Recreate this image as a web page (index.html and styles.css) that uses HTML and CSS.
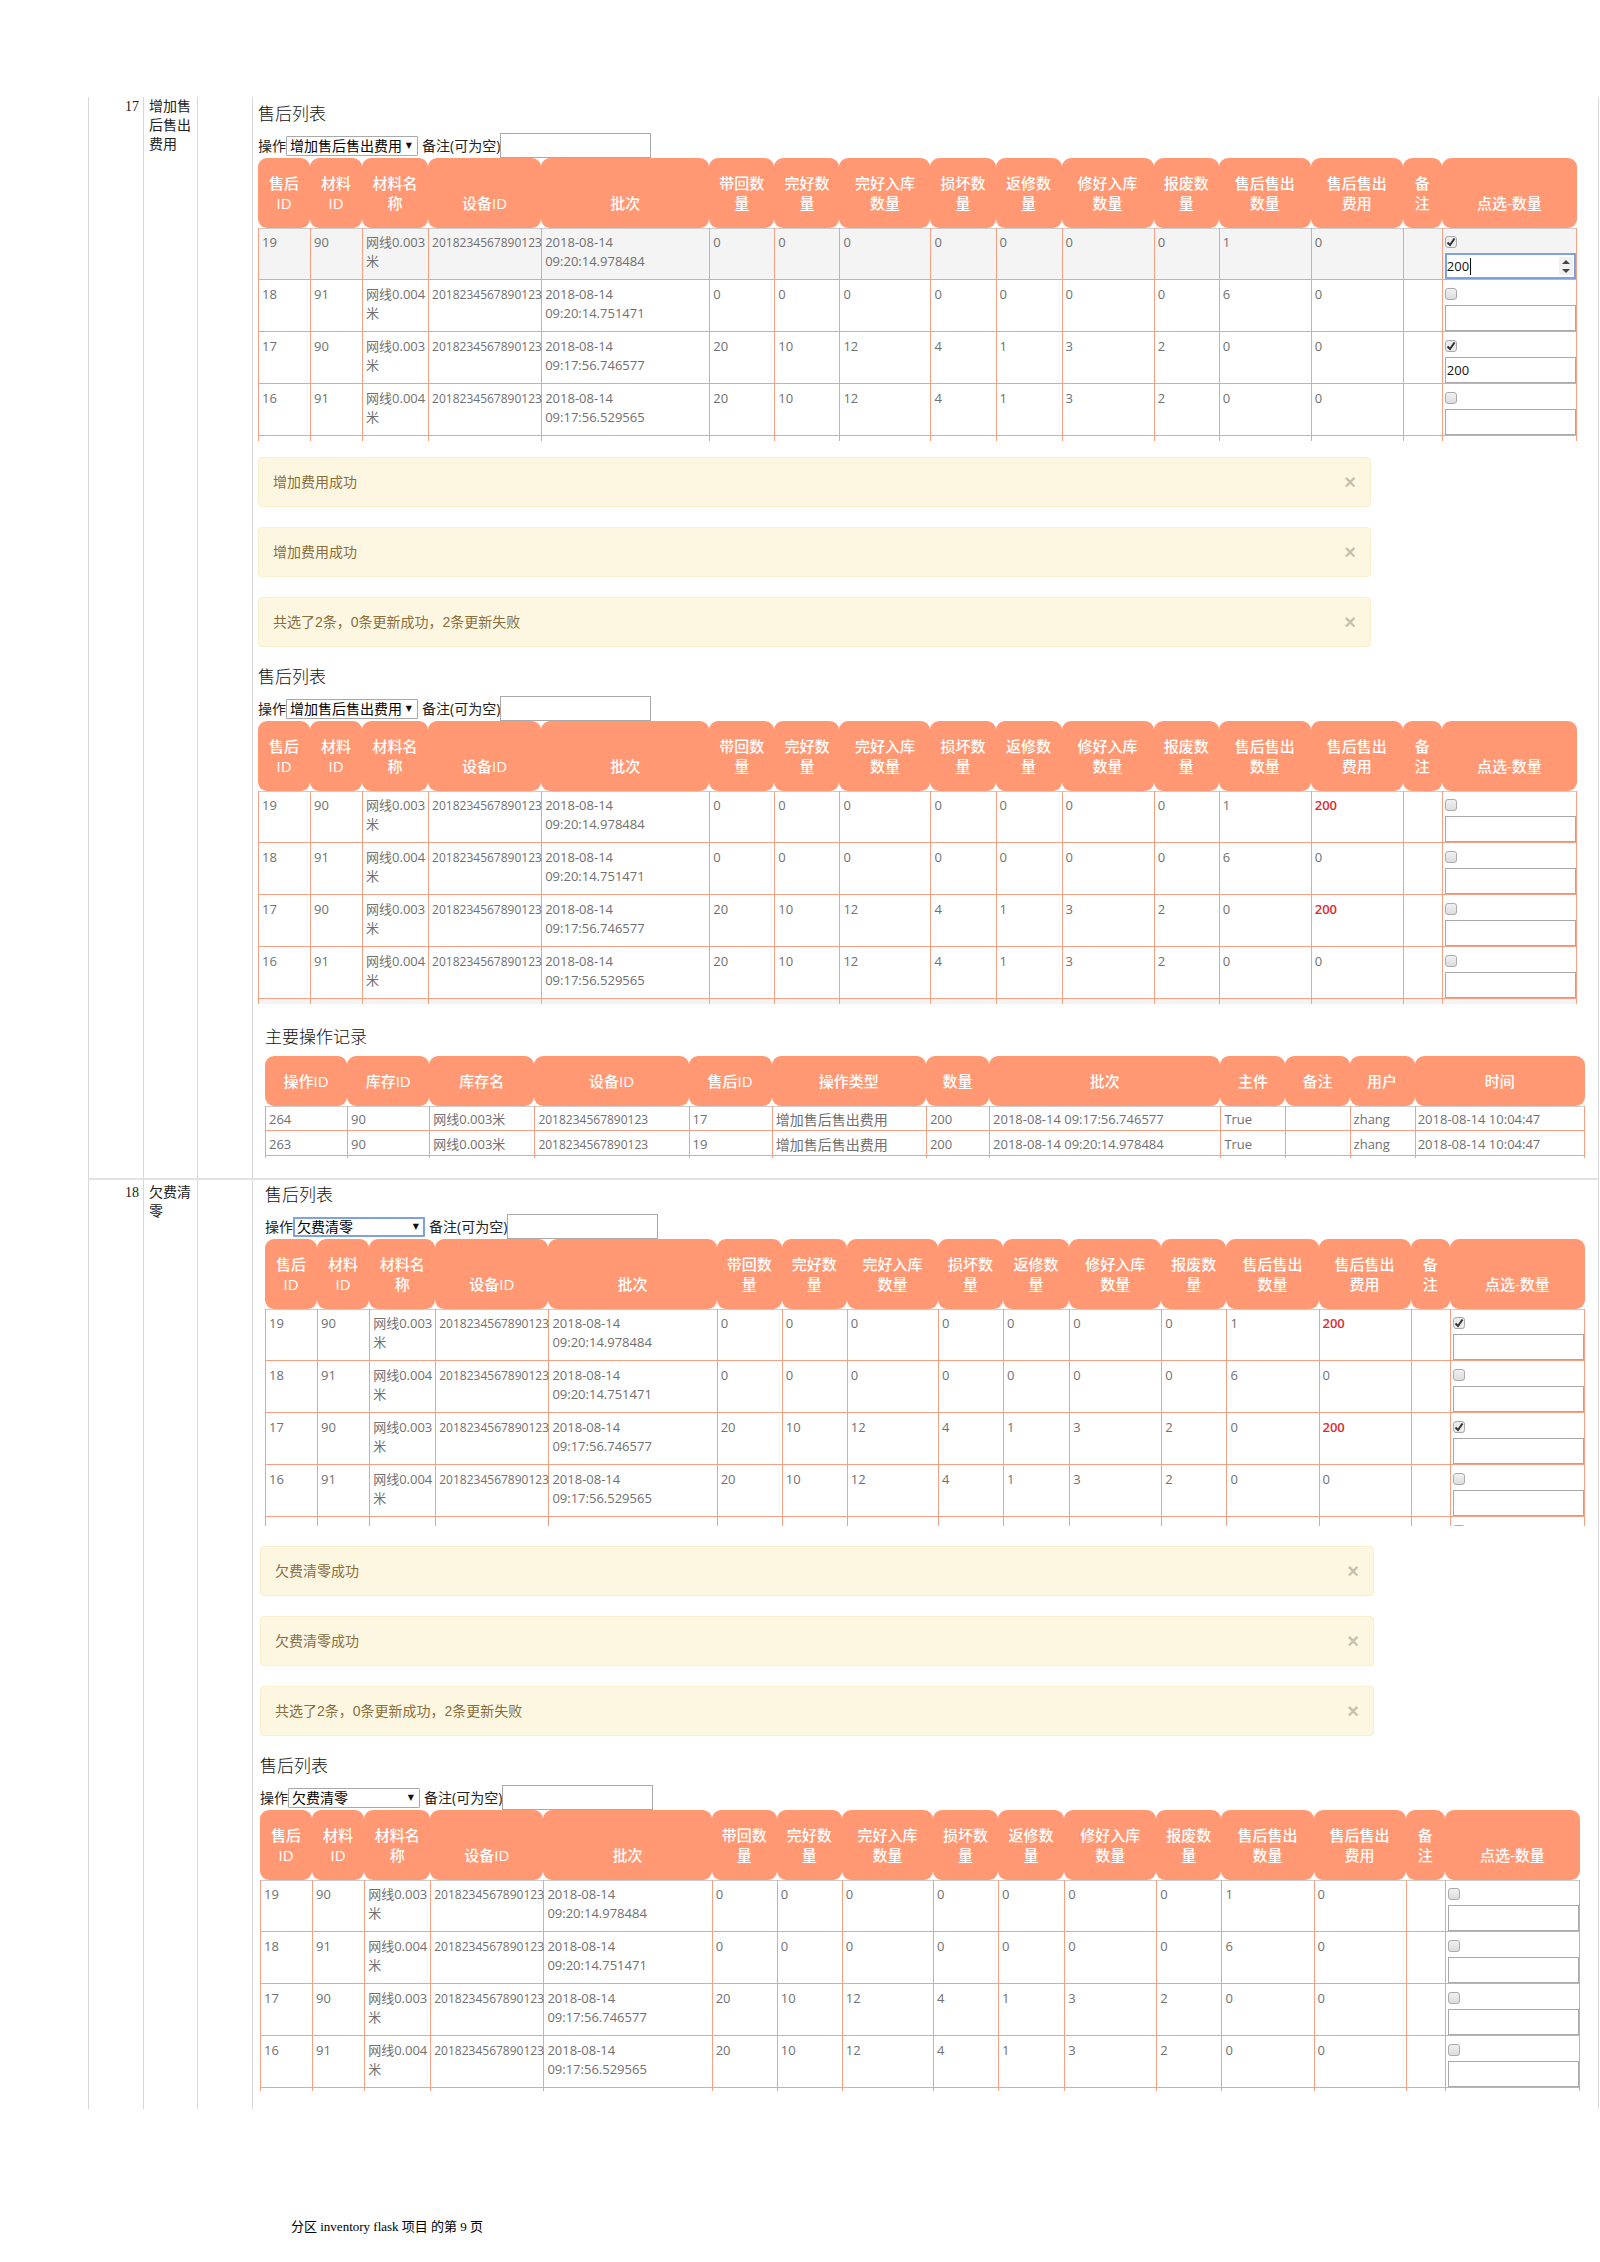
FILE: index.html
```html
<!DOCTYPE html>
<html lang="zh-CN">
<head>
<meta charset="utf-8">
<title>inventory flask 项目</title>
<link rel="stylesheet" href="styles.css">
</head>
<body>
<main class="doc">
<section class="entry">
<div class="no">17</div>
<div class="name">增加售后售出费用</div>
<div class="blank"></div>
<div class="body">

<div class="shot first">
<h2>售后列表</h2>
<form class="controls">
<label for="op1">操作</label><span class="pick"><select id="op1"><option>增加售后售出费用</option><option>欠费清零</option></select></span>
<label for="memo1" class="memo">备注(可为空)</label><input id="memo1" type="text">
</form>
<table class="grid">
<colgroup><col class="w52"><col class="w52"><col class="w66"><col class="w113"><col class="w168"><col class="w65"><col class="w65"><col class="w91"><col class="w65"><col class="w66"><col class="w92"><col class="w65"><col class="w92"><col class="w92"><col class="w39"><col class="w135"></colgroup>
<thead><tr><th>售后<br>ID</th><th>材料<br>ID</th><th>材料名<br>称</th><th>设备ID</th><th>批次</th><th>带回数<br>量</th><th>完好数<br>量</th><th>完好入库<br>数量</th><th>损坏数<br>量</th><th>返修数<br>量</th><th>修好入库<br>数量</th><th>报废数<br>量</th><th>售后售出<br>数量</th><th>售后售出<br>费用</th><th>备<br>注</th><th>点选-数量</th></tr></thead>
<tbody>
<tr class="hover"><td>19</td><td>90</td><td>网线0.003<br>米</td><td class="dev">2018234567890123</td><td>2018-08-14<br>09:20:14.978484</td><td>0</td><td>0</td><td>0</td><td>0</td><td>0</td><td>0</td><td>0</td><td>1</td><td>0</td><td></td><td><input type="checkbox" aria-label="点选" checked><div class="spin"><input class="active" type="number" aria-label="数量" value="200"><span class="caret"></span><svg viewBox="0 0 14 18" aria-hidden="true"><rect width="14" height="18" fill="#f0f0f0"/><path d="M3 7 7 3l4 4zM3 12l4 4 4-4z" fill="#444"/></svg></div></td></tr>
<tr><td>18</td><td>91</td><td>网线0.004<br>米</td><td class="dev">2018234567890123</td><td>2018-08-14<br>09:20:14.751471</td><td>0</td><td>0</td><td>0</td><td>0</td><td>0</td><td>0</td><td>0</td><td>6</td><td>0</td><td></td><td><input type="checkbox" aria-label="点选"><input type="number" aria-label="数量"></td></tr>
<tr><td>17</td><td>90</td><td>网线0.003<br>米</td><td class="dev">2018234567890123</td><td>2018-08-14<br>09:17:56.746577</td><td>20</td><td>10</td><td>12</td><td>4</td><td>1</td><td>3</td><td>2</td><td>0</td><td>0</td><td></td><td><input type="checkbox" aria-label="点选" checked><input type="number" aria-label="数量" value="200"></td></tr>
<tr><td>16</td><td>91</td><td>网线0.004<br>米</td><td class="dev">2018234567890123</td><td>2018-08-14<br>09:17:56.529565</td><td>20</td><td>10</td><td>12</td><td>4</td><td>1</td><td>3</td><td>2</td><td>0</td><td>0</td><td></td><td><input type="checkbox" aria-label="点选"><input type="number" aria-label="数量"></td></tr>
<tr class="tail"><td></td><td></td><td></td><td></td><td></td><td></td><td></td><td></td><td></td><td></td><td></td><td></td><td></td><td></td><td></td><td></td></tr>
</tbody>
</table>

<div class="alerts">
<div class="alert"><span>增加费用成功</span><button type="button" aria-label="关闭">×</button></div>
<div class="alert"><span>增加费用成功</span><button type="button" aria-label="关闭">×</button></div>
<div class="alert"><span>共选了2条，0条更新成功，2条更新失败</span><button type="button" aria-label="关闭">×</button></div>
</div>

<h2>售后列表</h2>
<form class="controls">
<label for="op2">操作</label><span class="pick"><select id="op2"><option>增加售后售出费用</option><option>欠费清零</option></select></span>
<label for="memo2" class="memo">备注(可为空)</label><input id="memo2" type="text">
</form>
<table class="grid">
<colgroup><col class="w52"><col class="w52"><col class="w66"><col class="w113"><col class="w168"><col class="w65"><col class="w65"><col class="w91"><col class="w65"><col class="w66"><col class="w92"><col class="w65"><col class="w92"><col class="w92"><col class="w39"><col class="w135"></colgroup>
<thead><tr><th>售后<br>ID</th><th>材料<br>ID</th><th>材料名<br>称</th><th>设备ID</th><th>批次</th><th>带回数<br>量</th><th>完好数<br>量</th><th>完好入库<br>数量</th><th>损坏数<br>量</th><th>返修数<br>量</th><th>修好入库<br>数量</th><th>报废数<br>量</th><th>售后售出<br>数量</th><th>售后售出<br>费用</th><th>备<br>注</th><th>点选-数量</th></tr></thead>
<tbody>
<tr><td>19</td><td>90</td><td>网线0.003<br>米</td><td class="dev">2018234567890123</td><td>2018-08-14<br>09:20:14.978484</td><td>0</td><td>0</td><td>0</td><td>0</td><td>0</td><td>0</td><td>0</td><td>1</td><td class="owed">200</td><td></td><td><input type="checkbox" aria-label="点选"><input type="number" aria-label="数量"></td></tr>
<tr><td>18</td><td>91</td><td>网线0.004<br>米</td><td class="dev">2018234567890123</td><td>2018-08-14<br>09:20:14.751471</td><td>0</td><td>0</td><td>0</td><td>0</td><td>0</td><td>0</td><td>0</td><td>6</td><td>0</td><td></td><td><input type="checkbox" aria-label="点选"><input type="number" aria-label="数量"></td></tr>
<tr><td>17</td><td>90</td><td>网线0.003<br>米</td><td class="dev">2018234567890123</td><td>2018-08-14<br>09:17:56.746577</td><td>20</td><td>10</td><td>12</td><td>4</td><td>1</td><td>3</td><td>2</td><td>0</td><td class="owed">200</td><td></td><td><input type="checkbox" aria-label="点选"><input type="number" aria-label="数量"></td></tr>
<tr><td>16</td><td>91</td><td>网线0.004<br>米</td><td class="dev">2018234567890123</td><td>2018-08-14<br>09:17:56.529565</td><td>20</td><td>10</td><td>12</td><td>4</td><td>1</td><td>3</td><td>2</td><td>0</td><td>0</td><td></td><td><input type="checkbox" aria-label="点选"><input type="number" aria-label="数量"></td></tr>
<tr class="tail hover"><td></td><td></td><td></td><td></td><td></td><td></td><td></td><td></td><td></td><td></td><td></td><td></td><td></td><td></td><td></td><td></td></tr>
</tbody>
</table>
</div>

<div class="shot inset log">
<h2>主要操作记录</h2>
<table class="grid">
<colgroup><col class="w82"><col class="w82"><col class="w105"><col class="w154"><col class="w83"><col class="w154"><col class="w63"><col class="w231"><col class="w65"><col class="w64"><col class="w65"><col class="w170"></colgroup>
<thead><tr><th>操作ID</th><th>库存ID</th><th>库存名</th><th>设备ID</th><th>售后ID</th><th>操作类型</th><th>数量</th><th>批次</th><th>主件</th><th>备注</th><th>用户</th><th>时间</th></tr></thead>
<tbody>
<tr><td>264</td><td>90</td><td>网线0.003米</td><td class="dev">2018234567890123</td><td>17</td><td class="kind">增加售后售出费用</td><td>200</td><td>2018-08-14 09:17:56.746577</td><td>True</td><td></td><td>zhang</td><td>2018-08-14 10:04:47</td></tr>
<tr><td>263</td><td>90</td><td>网线0.003米</td><td class="dev">2018234567890123</td><td>19</td><td class="kind">增加售后售出费用</td><td>200</td><td>2018-08-14 09:20:14.978484</td><td>True</td><td></td><td>zhang</td><td>2018-08-14 10:04:47</td></tr>
<tr class="tail"><td></td><td></td><td></td><td></td><td></td><td></td><td></td><td></td><td></td><td></td><td></td><td></td></tr>
</tbody>
</table>
</div>
</div>
</section>

<section class="entry second">
<div class="no">18</div>
<div class="name">欠费清零</div>
<div class="blank"></div>
<div class="body">

<div class="shot inset">
<h2>售后列表</h2>
<form class="controls">
<label for="op3">操作</label><span class="pick"><select id="op3" class="active"><option>欠费清零</option><option>增加售后售出费用</option></select></span>
<label for="memo3" class="memo">备注(可为空)</label><input id="memo3" type="text">
</form>
<table class="grid">
<colgroup><col class="w52"><col class="w52"><col class="w66"><col class="w113"><col class="w168"><col class="w65"><col class="w65"><col class="w91"><col class="w65"><col class="w66"><col class="w92"><col class="w65"><col class="w92"><col class="w92"><col class="w39"><col class="w135"></colgroup>
<thead><tr><th>售后<br>ID</th><th>材料<br>ID</th><th>材料名<br>称</th><th>设备ID</th><th>批次</th><th>带回数<br>量</th><th>完好数<br>量</th><th>完好入库<br>数量</th><th>损坏数<br>量</th><th>返修数<br>量</th><th>修好入库<br>数量</th><th>报废数<br>量</th><th>售后售出<br>数量</th><th>售后售出<br>费用</th><th>备<br>注</th><th>点选-数量</th></tr></thead>
<tbody>
<tr><td>19</td><td>90</td><td>网线0.003<br>米</td><td class="dev">2018234567890123</td><td>2018-08-14<br>09:20:14.978484</td><td>0</td><td>0</td><td>0</td><td>0</td><td>0</td><td>0</td><td>0</td><td>1</td><td class="owed">200</td><td></td><td><input type="checkbox" aria-label="点选" checked><input type="number" aria-label="数量"></td></tr>
<tr><td>18</td><td>91</td><td>网线0.004<br>米</td><td class="dev">2018234567890123</td><td>2018-08-14<br>09:20:14.751471</td><td>0</td><td>0</td><td>0</td><td>0</td><td>0</td><td>0</td><td>0</td><td>6</td><td>0</td><td></td><td><input type="checkbox" aria-label="点选"><input type="number" aria-label="数量"></td></tr>
<tr><td>17</td><td>90</td><td>网线0.003<br>米</td><td class="dev">2018234567890123</td><td>2018-08-14<br>09:17:56.746577</td><td>20</td><td>10</td><td>12</td><td>4</td><td>1</td><td>3</td><td>2</td><td>0</td><td class="owed">200</td><td></td><td><input type="checkbox" aria-label="点选" checked><input type="number" aria-label="数量"></td></tr>
<tr><td>16</td><td>91</td><td>网线0.004<br>米</td><td class="dev">2018234567890123</td><td>2018-08-14<br>09:17:56.529565</td><td>20</td><td>10</td><td>12</td><td>4</td><td>1</td><td>3</td><td>2</td><td>0</td><td>0</td><td></td><td><input type="checkbox" aria-label="点选"><input type="number" aria-label="数量"></td></tr>
<tr class="tail tall"><td></td><td></td><td></td><td></td><td></td><td></td><td></td><td></td><td></td><td></td><td></td><td></td><td></td><td></td><td></td><td><div class="peek"><input type="checkbox" aria-label="点选"></div></td></tr>
</tbody>
</table>
</div>

<div class="shot last">
<div class="alerts">
<div class="alert"><span>欠费清零成功</span><button type="button" aria-label="关闭">×</button></div>
<div class="alert"><span>欠费清零成功</span><button type="button" aria-label="关闭">×</button></div>
<div class="alert"><span>共选了2条，0条更新成功，2条更新失败</span><button type="button" aria-label="关闭">×</button></div>
</div>

<h2>售后列表</h2>
<form class="controls">
<label for="op4">操作</label><span class="pick"><select id="op4"><option>欠费清零</option><option>增加售后售出费用</option></select></span>
<label for="memo4" class="memo">备注(可为空)</label><input id="memo4" type="text">
</form>
<table class="grid">
<colgroup><col class="w52"><col class="w52"><col class="w66"><col class="w113"><col class="w168"><col class="w65"><col class="w65"><col class="w91"><col class="w65"><col class="w66"><col class="w92"><col class="w65"><col class="w92"><col class="w92"><col class="w39"><col class="w135"></colgroup>
<thead><tr><th>售后<br>ID</th><th>材料<br>ID</th><th>材料名<br>称</th><th>设备ID</th><th>批次</th><th>带回数<br>量</th><th>完好数<br>量</th><th>完好入库<br>数量</th><th>损坏数<br>量</th><th>返修数<br>量</th><th>修好入库<br>数量</th><th>报废数<br>量</th><th>售后售出<br>数量</th><th>售后售出<br>费用</th><th>备<br>注</th><th>点选-数量</th></tr></thead>
<tbody>
<tr><td>19</td><td>90</td><td>网线0.003<br>米</td><td class="dev">2018234567890123</td><td>2018-08-14<br>09:20:14.978484</td><td>0</td><td>0</td><td>0</td><td>0</td><td>0</td><td>0</td><td>0</td><td>1</td><td>0</td><td></td><td><input type="checkbox" aria-label="点选"><input type="number" aria-label="数量"></td></tr>
<tr><td>18</td><td>91</td><td>网线0.004<br>米</td><td class="dev">2018234567890123</td><td>2018-08-14<br>09:20:14.751471</td><td>0</td><td>0</td><td>0</td><td>0</td><td>0</td><td>0</td><td>0</td><td>6</td><td>0</td><td></td><td><input type="checkbox" aria-label="点选"><input type="number" aria-label="数量"></td></tr>
<tr><td>17</td><td>90</td><td>网线0.003<br>米</td><td class="dev">2018234567890123</td><td>2018-08-14<br>09:17:56.746577</td><td>20</td><td>10</td><td>12</td><td>4</td><td>1</td><td>3</td><td>2</td><td>0</td><td>0</td><td></td><td><input type="checkbox" aria-label="点选"><input type="number" aria-label="数量"></td></tr>
<tr><td>16</td><td>91</td><td>网线0.004<br>米</td><td class="dev">2018234567890123</td><td>2018-08-14<br>09:17:56.529565</td><td>20</td><td>10</td><td>12</td><td>4</td><td>1</td><td>3</td><td>2</td><td>0</td><td>0</td><td></td><td><input type="checkbox" aria-label="点选"><input type="number" aria-label="数量"></td></tr>
<tr class="tail short"><td></td><td></td><td></td><td></td><td></td><td></td><td></td><td></td><td></td><td></td><td></td><td></td><td></td><td></td><td></td><td></td></tr>
</tbody>
</table>
</div>
</div>
</section>
</main>
<footer class="foot">分区 inventory flask 项目 的第 9 页</footer>
</body>
</html>
```

FILE: styles.css
```css
* { box-sizing: border-box; }

body {
  margin: 0;
  background: #fff;
  color: #222;
  font-family: "Open Sans", "Noto Sans CJK SC", sans-serif;
  font-size: 14px;
}

/* document frame */
.doc { padding: 97px 1px 0 88px; }

.entry {
  display: grid;
  grid-template-columns: 55px 54px 55px minmax(0, 1fr);
  border-left: 1px solid #d8d8d8;
  border-right: 1px solid #d8d8d8;
  border-bottom: 2px solid #e2e2e2;
}
.entry.second { border-bottom: 0; }
.no, .name, .blank { border-right: 1px solid #d8d8d8; }
.no, .name {
  font-family: "Liberation Serif", "Noto Sans CJK SC", serif;
  font-size: 14px;
  line-height: 19px;
}
.no { text-align: right; padding-right: 4px; }
.name { padding: 0 5px; }
.second .no, .second .name { padding-top: 3px; }
.body { padding: 5px 0 20px; }
.second .body { padding: 3px 0 18px; }

.shot { padding: 0 21px 0 5px; }
.shot.inset { padding: 0 13px 0 12px; }
.shot.last { padding: 0 18px 0 7px; }
.shot.last .alerts { margin-top: 20px; }
.shot.log { margin-top: 21px; }

h2 {
  margin: 0 0 7px;
  font-size: 17px;
  line-height: 24px;
  font-weight: 300;
  color: #111;
}

/* controls above each list */
.controls {
  display: flex;
  align-items: center;
  height: 25px;
  line-height: 20px;
}
.memo { margin-left: 4px; }
.pick { position: relative; }
.pick::after {
  content: "▼";
  position: absolute;
  right: 6px;
  top: 0;
  font: 8px/19px "DejaVu Sans", sans-serif;
  color: #111;
  pointer-events: none;
}
select {
  display: block;
  appearance: none;
  width: 132px;
  height: 20px;
  margin: 0;
  padding: 0 3px;
  border: 1px solid #a9a9a9;
  border-radius: 1px;
  background: #fff;
  color: #000;
  font: 14px/18px "Open Sans", "Noto Sans CJK SC", sans-serif;
}
select.active { border: 2px solid #7ea2e0; padding: 0 2px; line-height: 16px; }
input[type="text"] {
  width: 151px;
  height: 25px;
  margin: 0;
  border: 1px solid #a9a9a9;
  background: #fff;
}

/* data tables */
.grid {
  width: 100%;
  table-layout: fixed;
  border-collapse: separate;
  border-spacing: 0;
}
.w39 { width: 39px; }
.w52 { width: 52px; }
.w63 { width: 63px; }
.w64 { width: 64px; }
.w65 { width: 65px; }
.w66 { width: 66px; }
.w82 { width: 82px; }
.w83 { width: 83px; }
.w91 { width: 91px; }
.w92 { width: 92px; }
.w105 { width: 105px; }
.w113 { width: 113px; }
.w135 { width: 135px; }
.w154 { width: 154px; }
.w168 { width: 168px; }
.w170 { width: 170px; }
.w231 { width: 231px; }

th {
  padding: 15px 0;
  border-radius: 9px;
  background: #ff9873;
  color: #fff;
  font-size: 15px;
  line-height: 20px;
  font-weight: 500;
  vertical-align: bottom;
  white-space: nowrap;
}
td {
  height: 52px;
  padding: 5px 0 0 3px;
  border-left: 1px solid #f7a083;
  border-bottom: 1px solid #f7a083;
  color: #707070;
  font-size: 13px;
  line-height: 19px;
  vertical-align: top;
  white-space: nowrap;
}
td:last-child { padding-left: 2px; border-right: 1px solid #f7a083; }
tbody tr:first-child td { box-shadow: inset 0 1px #ccc; }
.hover td { background: #f4f4f4; }
.dev { font-size: 12px; }
.owed { color: #dc2a33; font-weight: 600; }

.log td { height: 25px; padding-top: 4px; }
.log .kind { font-size: 14px; }

.grid .tail td { height: 5px; padding: 0; border-bottom: 0; }
.grid .tall td { height: 9px; }
.grid .short td { height: 3px; }
.log .tail td { height: 2px; }
.peek { height: 9px; padding: 5px 0 0 2px; overflow: hidden; }

input[type="checkbox"] {
  appearance: none;
  display: block;
  width: 12px;
  height: 12px;
  margin: 3px 0 0;
  border: 1px solid #aaa;
  border-radius: 3px;
  background: linear-gradient(#f0f0f0, #dcdcdc);
}
input[type="checkbox"]:checked {
  background: url('data:image/svg+xml,<svg xmlns="http://www.w3.org/2000/svg" viewBox="0 0 20 20"><path d="M3 11l5 5L17 3" fill="none" stroke="%23333" stroke-width="4"/></svg>') center / 10px 10px no-repeat #ececec;
}
input[type="number"] {
  appearance: textfield;
  display: block;
  width: 100%;
  height: 26px;
  margin: 5px 0 0;
  padding: 0 1px;
  border: 1px solid #a9a9a9;
  background: #fff;
  color: #111;
  font: 13px "Open Sans", sans-serif;
}
input[type="number"].active { border: 2px solid #7ea2e0; padding: 0; }
.spin { position: relative; }
.spin svg { position: absolute; right: 3px; top: 4px; width: 14px; height: 18px; }
.caret { position: absolute; left: 25px; top: 5px; width: 1px; height: 17px; background: #111; }

/* flash messages */
.alerts {
  display: grid;
  gap: 20px;
  margin: 16px 206px 18px 0;
}
.alert {
  display: flex;
  justify-content: space-between;
  align-items: center;
  height: 50px;
  padding: 0 14px;
  border: 1px solid #faefcc;
  border-radius: 4px;
  background: #fdf7e2;
  color: #8a6d3b;
  font: 14px/20px "Liberation Sans", "Noto Sans CJK SC", sans-serif;
}
.alert button {
  padding: 0;
  border: 0;
  background: none;
  color: #c5c1ae;
  font: bold 20px/20px "Liberation Sans", sans-serif;
}

.foot {
  padding: 108px 0 25px 291px;
  color: #000;
  font: 13px/20px "Liberation Serif", "Noto Sans CJK SC", serif;
}
```
